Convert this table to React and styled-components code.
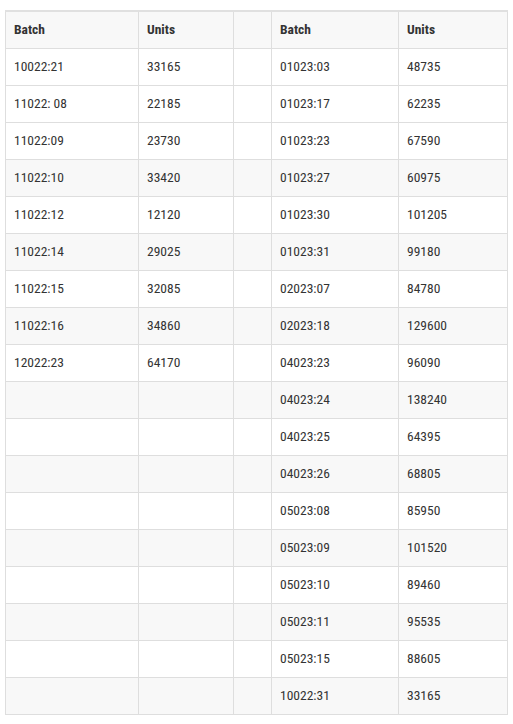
import React from "react";
import styled, { createGlobalStyle } from "styled-components";

const Global = createGlobalStyle`
  html, body { margin: 0; padding: 0; background: #fff; }
  body { font-family: "Roboto Condensed", Roboto, "Liberation Sans", sans-serif; }
`;

const Wrap = styled.div`
  padding: 10px 6px 0 5px;
`;

const Table = styled.table`
  border-collapse: collapse;
  width: 502px;
  table-layout: fixed;
  border-top: 2px solid #e0e0e0;
  font-size: 13.5px;
  color: #333;
`;

const Row = styled.tr`
  height: 37px;
  background: ${(p) => (p.$shade ? "#f8f8f8" : "#fff")};
`;

const Head = styled.th`
  text-align: left;
  font-weight: 700;
  color: #333;
  padding: 0 0 2px 8px;
  border: 1px solid #dedede;
  border-top: none;
  white-space: nowrap;
`;

const Cell = styled.td`
  padding: 0 0 2px 8px;
  border: 1px solid #dedede;
  white-space: nowrap;
`;

const left = [
  ["10022:21", "33165"],
  ["11022: 08", "22185"],
  ["11022:09", "23730"],
  ["11022:10", "33420"],
  ["11022:12", "12120"],
  ["11022:14", "29025"],
  ["11022:15", "32085"],
  ["11022:16", "34860"],
  ["12022:23", "64170"],
];

const right = [
  ["01023:03", "48735"],
  ["01023:17", "62235"],
  ["01023:23", "67590"],
  ["01023:27", "60975"],
  ["01023:30", "101205"],
  ["01023:31", "99180"],
  ["02023:07", "84780"],
  ["02023:18", "129600"],
  ["04023:23", "96090"],
  ["04023:24", "138240"],
  ["04023:25", "64395"],
  ["04023:26", "68805"],
  ["05023:08", "85950"],
  ["05023:09", "101520"],
  ["05023:10", "89460"],
  ["05023:11", "95535"],
  ["05023:15", "88605"],
  ["10022:31", "33165"],
];

export default function App() {
  return (
    <Wrap>
      <Global />
      <Table>
        <colgroup>
          <col style={{ width: 133 }} />
          <col style={{ width: 95 }} />
          <col style={{ width: 38 }} />
          <col style={{ width: 127 }} />
          <col style={{ width: 109 }} />
        </colgroup>
        <thead>
          <Row $shade>
            <Head>Batch</Head>
            <Head>Units</Head>
            <Head></Head>
            <Head>Batch</Head>
            <Head>Units</Head>
          </Row>
        </thead>
        <tbody>
          {right.map((r, i) => {
            const l = left[i] || ["", ""];
            return (
              <Row key={i} $shade={i % 2 === 1 && i > 1}>
                <Cell>{l[0]}</Cell>
                <Cell>{l[1]}</Cell>
                <Cell></Cell>
                <Cell>{r[0]}</Cell>
                <Cell>{r[1]}</Cell>
              </Row>
            );
          })}
        </tbody>
      </Table>
    </Wrap>
  );
}
